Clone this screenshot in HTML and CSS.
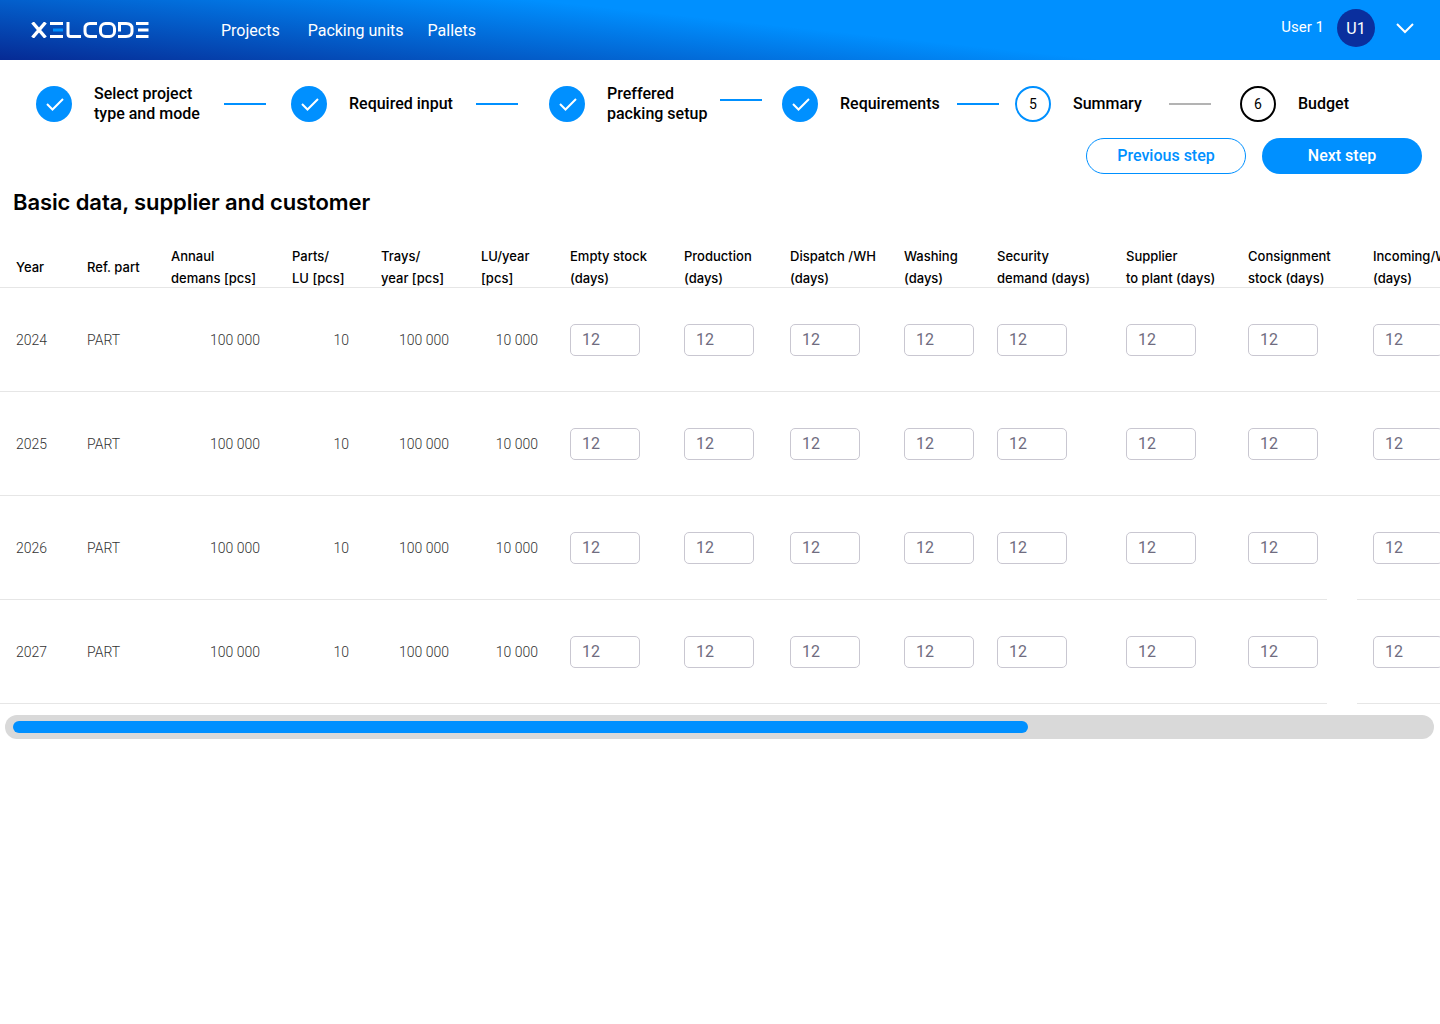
FILE: index.html
```html
<!DOCTYPE html>
<html lang="en">

<head>
    <meta charset="UTF-8">
    <meta name="viewport" content="width=device-width, initial-scale=1.0">
    <title>Basic data, supplier and customer</title>
    <link rel="stylesheet" href="styles.css">
</head>

<body>

    <header class="topbar">
        <a class="logo" href="#" aria-label="Xelcode">
            <svg width="118" height="16" viewBox="0 0 118 16" fill="none" stroke="#fff" stroke-width="3">
                <path d="M1.500 .500l13 15M14.500 .500l-13 15" stroke-width="3.400"/>
                <path d="M19 1.500h13M19 14.500h13"/>
                <path d="M22 8h10" stroke="#0090ff"/>
                <path d="M37 0v12q0 2.500 2.500 2.500H50"/>
                <path d="M66 1.500h-7q-5 0-5 5v3q0 5 5 5h7"/>
                <rect x="69.500" y="1.500" width="14" height="13" rx="5"/>
                <path d="M87 1.500h8q6 0 6 5v3q0 5-6 5h-8M88.500 1.500v8"/>
                <path d="M105 1.500h12.500M107 8h10.500M105 14.500h12.500"/>
            </svg>
        </a>
        <nav class="main-nav">
            <a href="#">Projects</a>
            <a href="#">Packing units</a>
            <a href="#">Pallets</a>
        </nav>
        <div class="user-box">
            <span class="user-name">User 1</span>
            <span class="avatar">U1</span>
            <svg class="chevron" width="20" height="12" viewBox="0 0 20 12" fill="none" stroke="#fff" stroke-width="2">
                <path d="M2 2l8 8 8-8"/>
            </svg>
        </div>
    </header>

    <ol class="stepper">
        <li class="step step-1">
            <span class="circle done"><svg width="18" height="14" viewBox="0 0 18 14" fill="none" stroke="#fff" stroke-width="2"><path d="M1 7l5.500 5.500L17 2"/></svg></span>
            <span class="step-label">Select project<br>type and mode</span>
            <span class="step-line"></span>
        </li>
        <li class="step step-2">
            <span class="circle done"><svg width="18" height="14" viewBox="0 0 18 14" fill="none" stroke="#fff" stroke-width="2"><path d="M1 7l5.500 5.500L17 2"/></svg></span>
            <span class="step-label">Required input</span>
            <span class="step-line"></span>
        </li>
        <li class="step step-3">
            <span class="circle done"><svg width="18" height="14" viewBox="0 0 18 14" fill="none" stroke="#fff" stroke-width="2"><path d="M1 7l5.500 5.500L17 2"/></svg></span>
            <span class="step-label">Preffered<br>packing setup</span>
            <span class="step-line raised"></span>
        </li>
        <li class="step step-4">
            <span class="circle done"><svg width="18" height="14" viewBox="0 0 18 14" fill="none" stroke="#fff" stroke-width="2"><path d="M1 7l5.500 5.500L17 2"/></svg></span>
            <span class="step-label">Requirements</span>
            <span class="step-line"></span>
        </li>
        <li class="step step-5">
            <span class="circle current">5</span>
            <span class="step-label">Summary</span>
            <span class="step-line grey"></span>
        </li>
        <li class="step step-6">
            <span class="circle todo">6</span>
            <span class="step-label">Budget</span>
        </li>
    </ol>

    <div class="actions">
        <button class="btn btn-outline">Previous step</button>
        <button class="btn btn-fill">Next step</button>
    </div>

    <h1 class="page-title">Basic data, supplier and customer</h1>

    <div class="table-wrap">
        <table class="data-table">
            <colgroup>
                <col class="c-year"><col class="c-ref"><col class="c-annual"><col class="c-parts"><col class="c-trays"><col class="c-lu">
                <col class="c-empty"><col class="c-prod"><col class="c-disp"><col class="c-wash"><col class="c-sec"><col class="c-sup"><col class="c-cons"><col class="c-gap"><col class="c-inc">
            </colgroup>
            <thead>
                <tr>
                    <th class="first single">Year</th>
                    <th class="single">Ref. part</th>
                    <th><div class="two">Annaul<br>demans [pcs]</div></th>
                    <th><div class="two">Parts/<br>LU [pcs]</div></th>
                    <th><div class="two">Trays/<br>year [pcs]</div></th>
                    <th><div class="two">LU/year<br>[pcs]</div></th>
                    <th><div class="two">Empty stock<br>(days)</div></th>
                    <th><div class="two">Production<br>(days)</div></th>
                    <th><div class="two">Dispatch /WH<br>(days)</div></th>
                    <th><div class="two">Washing<br>(days)</div></th>
                    <th><div class="two">Security<br>demand (days)</div></th>
                    <th><div class="two">Supplier<br>to plant (days)</div></th>
                    <th><div class="two">Consignment<br>stock (days)</div></th>
                    <th></th>
                    <th class="last"><div class="two">Incoming/WH<br>(days)</div></th>
                </tr>
            </thead>
            <tbody id="rows"></tbody>
        </table>
    </div>

    <div class="scroll-track"><div class="scroll-thumb"></div></div>

    <script>
        const years = [2024, 2025, 2026, 2027];
        const tbody = document.getElementById('rows');

        function inputCell(cls) {
            return '<td class="' + cls + '"><input class="num-input" type="text" value="12"></td>';
        }

        years.forEach(function (year) {
            // the line under the last two rows breaks before the last column
            const gapClass = year >= 2026 ? 'gap no-line' : 'gap';
            let html = '<td class="first">' + year + '</td><td>PART</td>';
            html += '<td class="right">100 000</td><td class="right">10</td>';
            html += '<td class="right">100 000</td><td class="right">10 000</td>';
            for (let i = 0; i < 7; i++) {
                html += inputCell('');
            }
            html += '<td class="' + gapClass + '"></td>' + inputCell('last');
            const tr = document.createElement('tr');
            tr.innerHTML = html;
            tbody.appendChild(tr);
        });
    </script>

</body>

</html>
```

FILE: styles.css
```css
* {
    box-sizing: border-box;
}

body {
    margin: 0;
    background-color: #ffffff;
    font-family: Roboto, "Liberation Sans", sans-serif;
    color: #000000;
    overflow-x: hidden;
}

.topbar {
    display: flex;
    align-items: center;
    height: 60px;
    padding: 0 25px 0 31px;
    background: linear-gradient(6deg, #062a94 0%, #0090ff 55%);
    color: #ffffff;
}

.logo {
    display: flex;
    margin-right: 72px;
}

.main-nav {
    display: flex;
    gap: 28px;
    font-size: 16px;
}

.main-nav a {
    color: #ffffff;
    text-decoration: none;
}

.main-nav a:last-child {
    margin-left: -4px;
}

.user-box {
    display: flex;
    align-items: center;
    margin: -4px 0 0 auto;
}

.user-name {
    font-size: 15px;
    margin: -2px 13px 0 0;
}

.avatar {
    display: flex;
    align-items: center;
    justify-content: center;
    width: 38px;
    height: 38px;
    border-radius: 50%;
    background-color: #0a2f9e;
    font-size: 16px;
    margin-right: 20px;
}

.stepper {
    display: flex;
    align-items: center;
    list-style: none;
    margin: 0;
    padding: 4px 0 0 36px;
    height: 84px;
}

.step {
    display: flex;
    align-items: center;
    flex: none;
}

.step-1 { width: 255px; }
.step-2 { width: 258px; }
.step-3 { width: 233px; }
.step-4 { width: 233px; }
.step-5 { width: 225px; }

.step-1 .step-label { width: 130px; }
.step-2 .step-label { width: 127px; }
.step-3 .step-label { width: 113px; }
.step-4 .step-label { width: 117px; }
.step-5 .step-label { width: 96px; }

.circle {
    display: flex;
    align-items: center;
    justify-content: center;
    flex: none;
    width: 36px;
    height: 36px;
    border-radius: 50%;
    font-size: 14px;
    margin-right: 22px;
}

.circle.done {
    background-color: #0090ff;
    padding-left: 2px;
}

.circle.current {
    border: 2px solid #0090ff;
}

.circle.todo {
    border: 2px solid #000000;
}

.step-label {
    font-size: 16px;
    font-weight: 500;
    line-height: 20px;
    flex: none;
}

.step-line {
    flex: none;
    width: 42px;
    height: 2px;
    background-color: #0090ff;
}

.step-line.raised {
    margin-top: -8px;
}

.step-line.grey {
    background-color: #b3b3b3;
}

.actions {
    display: flex;
    justify-content: flex-end;
    gap: 16px;
    padding-right: 18px;
    margin-top: -6px;
}

.btn {
    width: 160px;
    height: 36px;
    padding: 0 0 2px;
    border-radius: 18px;
    font-family: inherit;
    font-size: 16px;
    font-weight: 500;
    cursor: pointer;
}

.btn-outline {
    background-color: #ffffff;
    border: 1px solid #0090ff;
    color: #0090ff;
}

.btn-fill {
    background-color: #0090ff;
    border: none;
    color: #ffffff;
}

.page-title {
    margin: 12px 0 0 13px;
    font-family: Inter, Roboto, sans-serif;
    font-size: 22px;
    font-weight: 600;
    letter-spacing: -0.1px;
    line-height: 32px;
}

.table-wrap {
    width: 100%;
    overflow: hidden;
    margin-top: 27px;
}

.data-table {
    table-layout: fixed;
    width: 1600px;
    border-collapse: collapse;
}

.c-year { width: 87px; }
.c-ref { width: 84px; }
.c-annual { width: 121px; }
.c-parts { width: 89px; }
.c-trays { width: 100px; }
.c-lu { width: 89px; }
.c-empty { width: 114px; }
.c-prod { width: 106px; }
.c-disp { width: 114px; }
.c-wash { width: 93px; }
.c-sec { width: 129px; }
.c-sup { width: 122px; }
.c-cons { width: 79px; }
.c-gap { width: 30px; }
.c-inc { width: 243px; }

.data-table th {
    padding: 0;
    height: 42px;
    text-align: left;
    vertical-align: bottom;
    font-family: Inter, Roboto, sans-serif;
    font-size: 13px;
    font-weight: 500;
    line-height: 22px;
    white-space: nowrap;
    border-bottom: 1px solid #e6e6e6;
}

.data-table th.single {
    padding-bottom: 9px;
}

.two {
    margin-bottom: -2px;
}

.data-table td {
    padding: 1px 0 0;
    height: 104px;
    font-size: 14px;
    font-weight: 300;
    color: #333333;
    border-bottom: 1px solid #e6e6e6;
}

.data-table th.first,
.data-table td.first,
.data-table th.last,
.data-table td.last {
    padding-left: 16px;
}

.data-table td.right {
    text-align: right;
    padding-right: 32px;
}

.data-table td.no-line {
    border-bottom: none;
}

.num-input {
    display: block;
    width: 70px;
    height: 32px;
    padding: 0 11px 2px;
    border: 1px solid #c9c7d1;
    border-radius: 5px;
    font-family: inherit;
    font-size: 16px;
    color: #6f6c80;
    background-color: #ffffff;
}

.scroll-track {
    margin: 11px 6px 0 5px;
    height: 24px;
    padding: 6px 8px;
    border-radius: 12px;
    background-color: #d9d9d9;
}

.scroll-thumb {
    width: 1015px;
    height: 12px;
    border-radius: 6px;
    background-color: #0090ff;
}
```
